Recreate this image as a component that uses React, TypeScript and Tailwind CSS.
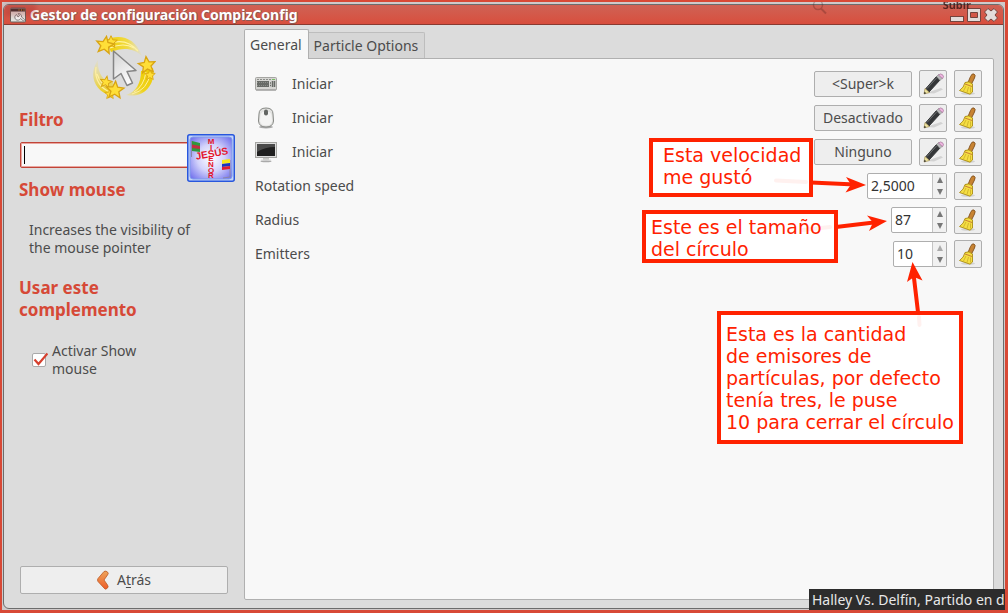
import { useState } from "react";
import type { ReactNode } from "react";

const star = "M0-7 2-2.4 7-2 3.2 1.2 4.4 6 0 3.4-4.4 6-3.2 1.2-7-2-2-2.4Z";

function ShowMouseLogo() {
  return (
    <svg viewBox="0 0 64 66" className="h-[66px] w-16" aria-hidden="true">
      <defs>
        <linearGradient id="trailTop" x1="0" x2="1">
          <stop offset="0" stopColor="#efce00" />
          <stop offset="0.6" stopColor="#f0da45" />
          <stop offset="1" stopColor="#eee08a" stopOpacity="0.15" />
        </linearGradient>
        <linearGradient id="trailLeft" x1="0" y1="0" x2="0" y2="1">
          <stop offset="0" stopColor="#eee08a" stopOpacity="0.2" />
          <stop offset="1" stopColor="#edcb00" />
        </linearGradient>
        <linearGradient id="trailRight" x1="1" y1="0" x2="0" y2="1">
          <stop offset="0" stopColor="#edcb00" />
          <stop offset="0.6" stopColor="#efd31c" />
          <stop offset="1" stopColor="#eee08a" stopOpacity="0.4" />
        </linearGradient>
        <linearGradient id="pointer" x1="0" y1="0" x2="0.4" y2="1">
          <stop offset="0" stopColor="#d2d2d2" />
          <stop offset="1" stopColor="#fafafa" />
        </linearGradient>
      </defs>
      <path d="M14 6C26 0 43 2 50 22 42 14 31 13 19 18Z" fill="url(#trailTop)" />
      <path d="M16 10Q34 3 46 17M18 14Q32 8 42 14" fill="none" stroke="#fff3a0" strokeWidth="1.2" />
      <path d="M6 26C-4 40 2 58 20 62L21 48C12 49 5 39 6 26Z" fill="url(#trailLeft)" />
      <path d="M4 33C2 47 10 55 18 58M5 40Q9 51 17 53" fill="none" stroke="#fff0a0" strokeWidth="1.2" />
      <path d="M61 34C64 49 53 65 34 61 44 58 49 49 49 37Z" fill="url(#trailRight)" />
      <path d="M58 39Q56 56 40 60M54 38Q52 52 42 58" fill="none" stroke="#fff0a0" strokeWidth="1" />
      <g fill="#ffdf38" stroke="#d9a514" strokeWidth="1.1">
        <path d={star} transform="translate(19 8) scale(.9)" />
        <path d={star} transform="translate(13 11) rotate(10) scale(1.25)" />
        <path d={star} transform="translate(58 41) scale(.75)" />
        <path d={star} transform="translate(55 31) rotate(-7) scale(1.2)" />
        <path d={star} transform="translate(14 48) rotate(10) scale(.85)" />
        <path d={star} transform="translate(18 60) scale(.75)" />
        <path d={star} transform="translate(23 56) rotate(4) scale(1.25)" />
      </g>
      <path d="M21.500 17v28l7.500-5.500 6 12 5.500-2.500-5.500-11.500 9-1Z" fill="url(#pointer)" stroke="#858585" strokeWidth="1.5" strokeLinejoin="round" />
    </svg>
  );
}

// The third letter, S, is the one that both names share where they cross.
const verticalLetters = ["M", "I", "", "E", "N", "O", "R"];

function JesusBadge() {
  return (
    <svg viewBox="0 0 48 48" className="absolute -top-2 -right-[7px] size-12" role="img" aria-label="Jesús mi Señor">
      <defs>
        <radialGradient id="badgeGlow" r="0.65">
          <stop offset="0" stopColor="#fff" />
          <stop offset="0.5" stopColor="#d3d3fb" />
          <stop offset="1" stopColor="#7777ee" />
        </radialGradient>
      </defs>
      <rect x="0.750" y="0.750" width="46.500" height="46.500" rx="2" fill="#c5d5f8" stroke="#2857dd" strokeWidth="1.5" />
      <rect x="3" y="3" width="42" height="42" rx="3" fill="url(#badgeGlow)" stroke="#7f9cec" />
      <path d="M4.500 7v16M43 26v17l-7 1" stroke="#8b86a8" fill="none" />
      <path d="M5 7l8 2v9l-8-1Z" fill="#2f973c" />
      <path d="M5 10.500l8 1.500v3l-8-1Z" fill="#c22d42" />
      <path d="M35 26l8-1v4l-8 1Z" fill="#f7e71d" />
      <path d="M35 30l8-1v3l-8 1Z" fill="#1a35bd" />
      <path d="M35 33l8-1v3l-8 1Z" fill="#df1d30" />
      <g fill="#e3152b" fontFamily="Liberation Sans, sans-serif" fontWeight="700" textAnchor="middle">
        {verticalLetters.map((letter, i) =>
          letter ? <text key={i} x="24" y={10 + i * 5.7} fontSize="8">{letter}</text> : null,
        )}
        <text x="25" y="23" fontSize="10" transform="rotate(-10 25 20)">JESÚS</text>
      </g>
    </svg>
  );
}

function KeyboardIcon() {
  return (
    <svg viewBox="0 0 22 14" className="h-3.5 w-[22px]" aria-hidden="true">
      <rect x="0.500" y="0.500" width="21" height="12.500" rx="1" fill="#d6d6d3" stroke="#a5a5a2" />
      <path d="M2 2.500h17" stroke="#8b8d89" strokeDasharray="2 1" />
      <rect x="2" y="4" width="12" height="6" fill="#686b67" />
      <path d="M2 5.500h12M2 8.500h12" stroke="#8c8e8a" strokeDasharray="1 1" />
      <path d="M15 6h1M15 8.500h1M17.500 4v6M19.500 4v6" stroke="#686b67" strokeWidth="1.500" />
      <path d="M17 2.500h3" stroke="#75bd61" />
      <path d="M1 13h20" stroke="#999" />
    </svg>
  );
}

function MouseIcon() {
  return (
    <svg viewBox="0 0 22 22" className="size-[22px]" aria-hidden="true">
      <ellipse cx="11" cy="20" rx="7" ry="1.500" fill="#aaa" />
      <path d="M4 7Q4 1 11 1T18 7L18.500 14Q18 20 11 20T3.500 14Z" fill="#e3e3e1" stroke="#868884" />
      <path d="M5.500 8Q7 4 11 4T16.500 8L17 14Q16 18.500 11 18.500T5 14Z" fill="#fff" opacity="0.600" />
      <rect x="9" y="2.500" width="4" height="6" rx="2" fill="#626562" />
    </svg>
  );
}

function ScreenIcon() {
  return (
    <svg viewBox="0 0 22 22" className="size-[22px]" aria-hidden="true">
      <ellipse cx="11" cy="20.300" rx="5.500" ry="1" fill="#aaa" />
      <path d="M8 16h6v3H8Z" fill="#c7c7c4" />
      <rect x="0.500" y="1.500" width="21" height="15" fill="#ddd" stroke="#a5a5a2" />
      <rect x="2" y="3" width="18" height="12" fill="#202020" />
      <path d="M2 3h18v3Q10 6 2 11Z" fill="#4b4b4b" />
      <path d="M6 19h10" stroke="#ddd" />
    </svg>
  );
}

function PencilIcon() {
  return (
    <svg viewBox="0 0 24 24" className="size-6 shrink-0" aria-hidden="true">
      <path d="M5 21L20 16l2 1.500-9 4Z" fill="#d2d2d2" />
      <path d="M4.500 17L15.500 4.500l3.500 3.500L8 20Z" fill="#343638" stroke="#343638" strokeLinejoin="round" />
      <path d="M6 16.500L16 5.500" stroke="#6c6f70" strokeWidth="1" />
      <path d="M15.500 4.500l2-2 4 3.500-2.500 2.500Z" fill="#b9babb" stroke="#858585" strokeWidth="0.600" />
      <path d="M17.500 3q2-2 4-.3t0 4Z" fill="#edb4df" stroke="#a47598" strokeWidth="0.700" />
      <path d="M3 22l1-5.500 4.500 4Z" fill="#efe5a2" stroke="#a18c55" strokeWidth="0.700" />
      <path d="M3 22l.6-2.200 1.600 1.400Z" fill="#292929" />
    </svg>
  );
}

function BroomIcon() {
  return (
    <svg viewBox="0 0 24 24" className="size-6 shrink-0" aria-hidden="true">
      <ellipse cx="12" cy="21.500" rx="7" ry="1.300" fill="#d2d2d2" />
      <path d="M12 10.500L14.500 4.500q1.500-3.500 3.500-2.500t.5 4L15.500 12Z" fill="#c78332" stroke="#81501e" strokeWidth="0.900" />
      <path d="M9 10.500Q13 8.500 16.500 12l0 8-2.500 2.200-10.500-3.700q4.500-3 5.500-8Z" fill="#f5de42" stroke="#a98b13" strokeWidth="0.900" strokeLinejoin="round" />
      <path d="M10 14L7.500 19M12.500 15L11 20.500M14.500 15.500v5" stroke="#c4a824" fill="none" strokeWidth="0.700" />
      <path d="M9 12l7 2.500" stroke="#b5552f" strokeWidth="0.700" />
    </svg>
  );
}

function IconButton({ label, children }: { label: string; children: ReactNode }) {
  return (
    <button type="button" aria-label={label} className="flex size-7 shrink-0 items-center justify-center rounded-xs border border-[#aeaeae] bg-[#eeeeee]">
      {children}
    </button>
  );
}

function ActionRow({ icon, value }: { icon: ReactNode; value: string }) {
  return (
    <div className="flex h-[34px] items-center gap-[7px]">
      <span className="flex w-[30px] items-center">{icon}</span>
      <span className="grow pb-0.5">Iniciar</span>
      <button type="button" className="h-[26px] w-[98px] rounded-xs border border-[#aeaeae] bg-[#eeeeee] text-center leading-6">{value}</button>
      <IconButton label="Editar"><PencilIcon /></IconButton>
      <IconButton label="Restablecer"><BroomIcon /></IconButton>
    </div>
  );
}

function SpinRow({ id, label, initial, width, atMax }: { id: string; label: string; initial: string; width: string; atMax?: boolean }) {
  const [value, setValue] = useState(initial);
  const step = (delta: number) => {
    const decimals = (value.split(",")[1] ?? "").length;
    const next = parseFloat(value.replace(",", ".")) + delta;
    if (!Number.isNaN(next)) setValue(next.toFixed(decimals).replace(".", ","));
  };
  return (
    <div className="flex h-[34px] items-center gap-[7px]">
      <label htmlFor={id} className="grow pb-0.5">{label}</label>
      <div className={`flex h-[26px] rounded-xs border border-[#aeaeae] bg-white ${width}`}>
        <input id={id} value={value} onChange={(e) => setValue(e.target.value)} className="min-w-0 grow bg-transparent pb-0.5 pl-[3px] text-[#333] outline-none" />
        <div className="flex w-3.5 shrink-0 flex-col border-l border-[#c4c4c4] bg-[#f1f1f1]">
          <button type="button" aria-label={`Aumentar ${label}`} disabled={atMax} onClick={() => step(1)} className="flex flex-1 items-center justify-center text-[#777] disabled:text-[#aaa]">
            <svg viewBox="0 0 6 6" className="size-1.5" aria-hidden="true"><path d="M3 0l3 6H0Z" fill="currentColor" /></svg>
          </button>
          <button type="button" aria-label={`Disminuir ${label}`} onClick={() => step(-1)} className="flex flex-1 items-center justify-center text-[#777]">
            <svg viewBox="0 0 6 6" className="size-1.5" aria-hidden="true"><path d="M3 6L6 0H0Z" fill="currentColor" /></svg>
          </button>
        </div>
      </div>
      <IconButton label={`Restablecer ${label}`}><BroomIcon /></IconButton>
    </div>
  );
}

function TitleBar() {
  return (
    <header className="flex h-5 items-center gap-1 border-b border-[#8a3a30] bg-linear-to-b from-[#cf6255] to-[#d84e3d] pr-[5px] pl-1.5">
      <svg viewBox="0 0 16 16" className="size-4" aria-hidden="true">
        <rect x="0.500" y="1" width="15" height="14" rx="1" fill="#e3e3df" stroke="#68635d" />
        <path d="M1 1.500h14v3H1Z" fill="#383838" />
        <path d="M8.500 3h1M11 3h1M13.500 3h1" stroke="#edb82e" />
        <path d="M6.500 7.500a3 3 0 1 0 4 4l3 2.500 1.200-1.300-3.200-2.700a3 3 0 0 0-3.200-3.500l1.200 2.200-1.500 1.300Z" fill="#f5f5f5" stroke="#777" strokeWidth="0.900" />
      </svg>
      <h1 className="grow text-[14px] leading-5 font-bold text-white [text-shadow:1px_0_#8a5a55,0_1px_#8a5a55]">Gestor de configuración CompizConfig</h1>
      <button type="button" aria-label="Minimizar" className="flex h-3.5 items-end">
        <svg viewBox="0 0 14 6" className="h-1.5 w-3.5"><rect x="0.500" y="0.500" width="13" height="5" fill="#e3dcda" stroke="#74443e" /></svg>
      </button>
      <button type="button" aria-label="Maximizar" className="-ml-px">
        <svg viewBox="0 0 14 14" className="size-3.5"><path d="M.5.5h13v13H.5ZM3.500 4.500v5h7v-5Z" fill="#e3dcda" fillRule="evenodd" stroke="#74443e" /></svg>
      </button>
      <button type="button" aria-label="Cerrar" className="-ml-px">
        <svg viewBox="0 0 14 14" className="size-3.5"><path d="M4 .5L7 3l3-2.500L13.500 4 11 7l2.500 3-3.500 3.500L7 11l-3 2.500L.5 10 3 7 .5 4Z" fill="#e3dcda" stroke="#74443e" strokeLinejoin="round" /></svg>
      </button>
    </header>
  );
}

function Sidebar() {
  const [filter, setFilter] = useState("");
  const [enabled, setEnabled] = useState(true);
  return (
    <aside className="flex w-60 shrink-0 flex-col pr-4 pb-[14px] pl-[15px]">
      <div className="flex justify-center pt-[9px]"><ShowMouseLogo /></div>
      <h2 className="mt-[9px] text-[17px] leading-[22px] font-bold text-[#d64937]"><label htmlFor="filtro">Filtro</label></h2>
      <div className="relative mt-[11px] h-[26px] pl-px">
        <input id="filtro" value={filter} onChange={(e) => setFilter(e.target.value)} className="h-[26px] w-full rounded-xs border border-[#c04538] bg-[#f8f8f8] px-[3px] caret-black shadow-[inset_0_0_0_1px_#eaa69f] outline-none" />
        {filter === "" && <span className="pointer-events-none absolute top-1 left-[5px] h-[18px] w-px bg-black" />}
        <JesusBadge />
      </div>
      <h2 className="mt-[11px] text-[17px] leading-[22px] font-bold text-[#d64937]">Show mouse</h2>
      <p className="mt-5 w-[180px] pl-2.5 leading-[18px]">Increases the visibility of the mouse pointer</p>
      <h2 className="mt-5 w-36 text-[17px] leading-[22px] font-bold text-[#d64937]">Usar este complemento</h2>
      <div className="mt-[21px] flex items-center gap-1 pl-[13px]">
        <span className="relative flex size-4">
          <input id="activar" type="checkbox" checked={enabled} onChange={(e) => setEnabled(e.target.checked)} className="mt-px size-3.5 appearance-none rounded-xs border border-[#aaa] bg-white" />
          {enabled && (
            <svg viewBox="0 0 16 16" className="pointer-events-none absolute inset-0 size-4" aria-hidden="true">
              <path d="M2.500 7.500L6.500 12 15.500 1.500" fill="none" stroke="#d6402e" strokeWidth="2.200" />
            </svg>
          )}
        </span>
        <label htmlFor="activar" className="w-24 leading-[18px]">Activar Show mouse</label>
      </div>
      <button type="button" className="mt-auto ml-px flex h-7 items-center justify-center gap-2 rounded-xs border border-[#aeaeae] bg-[#eeeeee]">
        <svg viewBox="0 0 12 20" className="h-5 w-3" aria-hidden="true">
          <defs>
            <linearGradient id="back" x1="0" y1="0" x2="0" y2="1"><stop offset="0" stopColor="#eda45b" /><stop offset="1" stopColor="#ee5c28" /></linearGradient>
          </defs>
          <path d="M7 1.500Q9 .5 10.500 2T10.500 5L7 10l3.500 5q1.500 2-.5 3.500t-3-.5L1 11.500q-1-1.500 0-3Z" fill="url(#back)" stroke="#bd5a25" strokeWidth="0.800" />
        </svg>
        <span className="pb-0.5">A<span className="underline underline-offset-2">t</span>rás</span>
      </button>
    </aside>
  );
}

function Callout({ className, children }: { className: string; children: ReactNode }) {
  return (
    <p className={`absolute border-4 border-[#ff2200] bg-white font-['DejaVu_Sans',sans-serif] text-[19px] leading-[22px] whitespace-pre text-[#ff2200] ${className}`}>{children}</p>
  );
}

function Annotations() {
  return (
    <div className="pointer-events-none">
      <Callout className="top-[136px] right-[192px] h-[59px] w-[164px] pt-0.5 pl-2.5">{"Esta velocidad\nme gustó"}</Callout>
      <Callout className="top-[208px] right-[167px] h-[53px] w-[196px] pt-0.5 pl-[5px]">{"Este es el tamaño\ndel círculo"}</Callout>
      <Callout className="top-[309px] right-[42px] h-[133px] w-[246px] pt-2 pl-[5px]">{"Esta es la cantidad\nde emisores de\npartículas, por defecto\ntenía tres, le puse\n10 para cerrar el círculo"}</Callout>
      <svg viewBox="0 0 308 200" className="absolute top-[148px] -right-[3px] h-[200px] w-[308px]" aria-hidden="true">
        <g stroke="#ff2200" strokeWidth="4" fill="#ff2200">
          <path d="M111 32.500L155 34.500M136 77L178 72M218 162L213.300 122" />
          <g stroke="none">
            <path d="M166 35L146 27 151 34.500 145.500 42.500Z" />
            <path d="M187 71L167 65.500 173 72.500 169 81Z" />
            <path d="M212.500 112L207 132 214 127 222.500 130.500Z" />
          </g>
          <path d="M76 30.500L106 32M102 80L130 77M219 167L219.500 175" opacity="0.060" strokeLinecap="round" />
        </g>
      </svg>
    </div>
  );
}

// What shows through the translucent title bar from the window behind.
function BehindTitleBar() {
  return (
    <div className="pointer-events-none absolute inset-x-0 -top-0.5 h-6 overflow-hidden text-[#3c1512]">
      <span className="absolute -top-[3px] right-[34px] text-[11px] leading-4 font-bold opacity-80">Subir</span>
      <svg viewBox="0 0 18 16" className="absolute top-0 right-[177px] h-4 w-[18px] opacity-25" aria-hidden="true">
        <circle cx="8" cy="5" r="4.500" fill="none" stroke="currentColor" strokeWidth="1.500" />
        <path d="M11 8.500l5 5" stroke="currentColor" strokeWidth="2" />
      </svg>
      <span className="absolute top-1 left-0.5 h-3 w-8 bg-[#a01818] opacity-25 blur-[2px]" />
    </div>
  );
}

export default function App() {
  const [tab, setTab] = useState(0);
  return (
    <div className="relative flex min-h-screen flex-col overflow-hidden border-t-2 border-r-3 border-b-3 border-l-2 border-[#d84936] bg-[#cfcaca] pt-0.5 pr-px pb-px pl-px font-['Noto_Sans',sans-serif] text-[14px] text-[#4c4c4c]">
      <div className="flex grow flex-col overflow-hidden rounded-md border border-[#6c6c6c] bg-[#dcdcdc]">
        <TitleBar />
        <div className="flex grow">
          <Sidebar />
          <main className="flex min-w-0 grow flex-col pt-1 pr-[9px] pb-2">
            <div role="tablist" className="flex items-end">
              <button type="button" role="tab" aria-selected={tab === 0} onClick={() => setTab(0)} className="relative z-10 -mb-px h-[30px] rounded-t-xs border border-b-0 border-[#b0b0b0] bg-[#f8f8f8] pr-1.5 pl-[5px]">General</button>
              <button type="button" role="tab" aria-selected={tab === 1} onClick={() => setTab(1)} className="h-[26px] rounded-tr-xs border-t border-r border-[#bdbdbd] bg-[#d6d6d6] pr-1.5 pl-[5px]">Particle Options</button>
            </div>
            <section className="grow rounded-r-xs rounded-b-xs border border-[#b0b0b0] bg-[#f8f8f8] pt-2 pr-[11px] pl-2.5">
              <ActionRow icon={<KeyboardIcon />} value="<Super>k" />
              <ActionRow icon={<MouseIcon />} value="Desactivado" />
              <ActionRow icon={<ScreenIcon />} value="Ninguno" />
              <SpinRow id="rotation" label="Rotation speed" initial="2,5000" width="w-20" />
              <SpinRow id="radius" label="Radius" initial="87" width="w-14" />
              <SpinRow id="emitters" label="Emitters" initial="10" width="w-[54px]" atMax />
            </section>
          </main>
        </div>
      </div>
      <BehindTitleBar />
      <Annotations />
      <div className="absolute right-0 bottom-0 h-[21px] w-[196px] overflow-hidden bg-[#2c2c2c] pl-[3px] text-[14px] leading-[22px] whitespace-nowrap text-[#e8e8e8]">Halley Vs. Delfín, Partido en directo</div>
    </div>
  );
}
